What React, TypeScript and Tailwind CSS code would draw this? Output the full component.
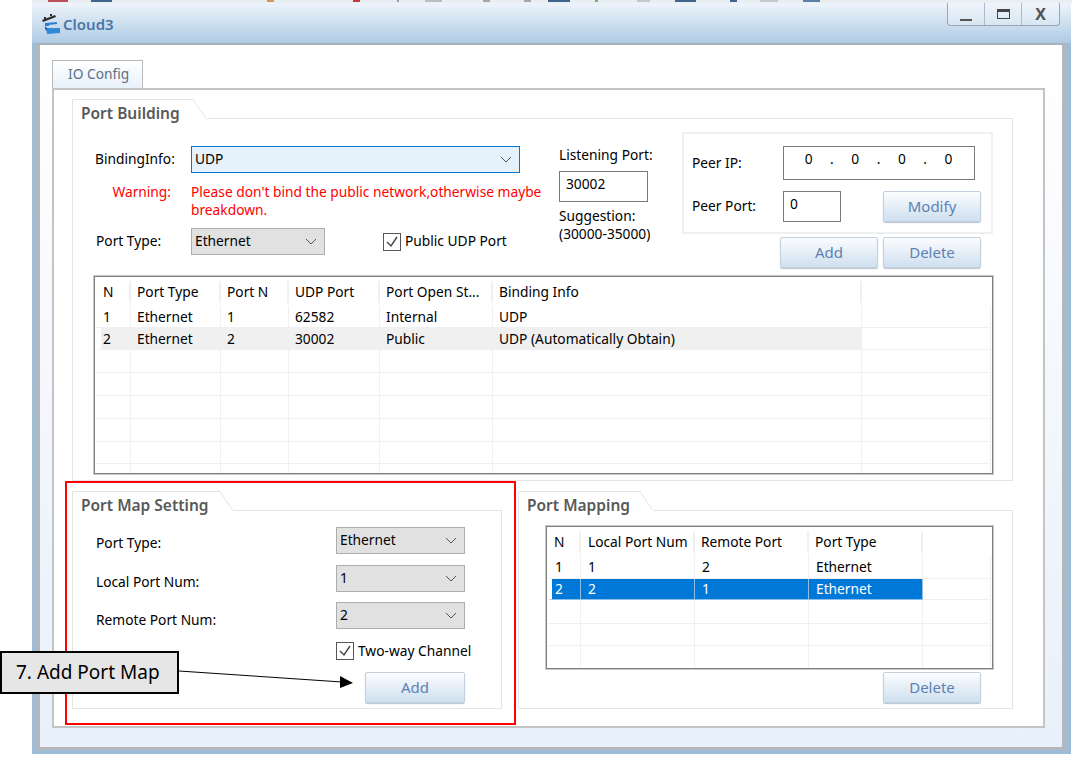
import React from 'react';

const FONT = '"Noto Sans", "DejaVu Sans", sans-serif';

function Chevron() {
  return (
    <svg width="12" height="7" viewBox="0 0 12 7" className="shrink-0">
      <polyline points="1,1 6,6 11,1" fill="none" stroke="#555" strokeWidth="1" />
    </svg>
  );
}

function Select({ value, className, focused }: { value: string; className: string; focused?: boolean }) {
  return (
    <div
      className={`flex h-[27px] items-center justify-between border pl-[3px] pr-[7px] text-black ${
        focused ? 'border-[#0078d7] bg-[#e5f1fb]' : 'border-[#adadad] bg-[#e1e1e1]'
      } ${className}`}
    >
      <span>{value}</span>
      <Chevron />
    </div>
  );
}

function Check({ label }: { label: string }) {
  return (
    <div className="flex h-[18px] items-center gap-[4px] text-black">
      <div className="flex h-[18px] w-[18px] items-center justify-center border border-[#555] bg-white">
        <svg width="14" height="14" viewBox="0 0 14 14">
          <polyline points="2,7 6,11 12,2" fill="none" stroke="#444" strokeWidth="1.4" />
        </svg>
      </div>
      <span>{label}</span>
    </div>
  );
}

function Btn({ label, className }: { label: string; className: string }) {
  return (
    <button className={`h-[31px] rounded-[2px] border border-[#c3d0db] bg-gradient-to-b from-[#fbfcfe] to-[#cfe0f0] text-[15px] text-[#5e82b3] shadow-[0_1px_1px_#b8c4cf] ${className}`}>
      {label}
    </button>
  );
}

function Group({ title, tabClass, className, children }: { title: string; tabClass: string; className: string; children: React.ReactNode }) {
  return (
    <div className={`flex flex-col ${className}`}>
      <div className="flex h-[20px] shrink-0">
        <div className={`rounded-tl-[2px] border-l border-t border-[#e4e4e4] pl-[8px] text-[15.5px] font-semibold leading-[27px] text-[#595959] ${tabClass}`}>
          {title}
        </div>
        <svg width="14" height="20" viewBox="0 0 14 20" className="shrink-0">
          <line x1="0" y1="0.5" x2="13" y2="19.5" stroke="#e4e4e4" />
        </svg>
        <div className="flex-1 border-b border-[#e4e4e4]" />
      </div>
      <div className="flex-1 border-x border-b border-[#e4e4e4]">{children}</div>
    </div>
  );
}

const BUILD_COLS = [
  { name: 'N', cls: 'w-[35px] pl-[7px]' },
  { name: 'Port Type', cls: 'w-[90px] pl-[6px]' },
  { name: 'Port N', cls: 'w-[68px] pl-[6px]' },
  { name: 'UDP Port', cls: 'w-[91px] pl-[6px]' },
  { name: 'Port Open St...', cls: 'w-[113px] pl-[6px]' },
  { name: 'Binding Info', cls: 'w-[369px] pl-[6px]' },
  { name: '', cls: 'pl-[6px]' },
];

const BUILD_ROWS = [
  { h: 'h-[22px]', cells: ['1', 'Ethernet', '1', '62582', 'Internal', 'UDP', ''] },
  { h: 'h-[22px]', cells: ['2', 'Ethernet', '2', '30002', 'Public', 'UDP (Automatically Obtain)', ''], active: true },
  { h: 'h-[23px]', cells: ['', '', '', '', '', '', ''] },
  { h: 'h-[23px]', cells: ['', '', '', '', '', '', ''] },
  { h: 'h-[23px]', cells: ['', '', '', '', '', '', ''] },
  { h: 'h-[23px]', cells: ['', '', '', '', '', '', ''] },
  { h: 'h-[22px]', cells: ['', '', '', '', '', '', ''] },
  { h: 'h-[10px]', cells: ['', '', '', '', '', '', ''] },
];

const MAP_COLS = [
  { name: 'N', cls: 'w-[33px] pl-[6px]' },
  { name: 'Local Port Num', cls: 'w-[114px] pl-[7px]' },
  { name: 'Remote Port', cls: 'w-[114px] pl-[6px]' },
  { name: 'Port Type', cls: 'w-[114px] pl-[6px]' },
  { name: '', cls: 'pl-[6px]' },
];

const MAP_ROWS = [
  { h: 'h-[24px]', cells: ['1', '1', '2', 'Ethernet', ''] },
  { h: 'h-[21px]', cells: ['2', '2', '1', 'Ethernet', ''], selected: true },
  { h: 'h-[24px]', cells: ['', '', '', '', ''] },
  { h: 'h-[22px]', cells: ['', '', '', '', ''] },
  { h: 'h-[23px]', cells: ['', '', '', '', ''] },
];

type Row = { h: string; cells: string[]; active?: boolean; selected?: boolean };

function GridTable({ cols, rows, className, headClass, inset, cellPad }: { cols: { name: string; cls: string }[]; rows: Row[]; className: string; headClass: string; inset: string; cellPad: string }) {
  return (
    <div className={`overflow-hidden border border-[#808080] bg-white p-[1px] shadow-[0_0_0_1px_#c8c8c8] ${className}`}>
      <table className="w-full table-fixed border-separate border-spacing-0 text-left text-black">
        <thead>
          <tr className={headClass}>
            {cols.map((c, i) => (
              <th key={i} className={`truncate p-0 font-normal ${c.cls}`}>
                <div className={`leading-[22px] ${i < cols.length - 1 ? 'border-r-2 border-[#f0f0f0]' : ''}`}>{c.name}&nbsp;</div>
              </th>
            ))}
          </tr>
        </thead>
        <tbody>
          {rows.map((r, ri) => (
            <tr key={ri} className={r.h}>
              {r.cells.map((cell, i) => {
                const last = i === cols.length - 1;
                let tone = 'border-[#f0f0f0]';
                if (!last && r.selected) tone = 'border-[#8fc0ea] bg-[#0078d7] text-white';
                if (!last && r.active) tone = 'border-[#f0f0f0] bg-[#f0f0f0]';
                const insetCell = i === 0 && (r.active || r.selected);
                return (
                  <td
                    key={i}
                    className={`overflow-hidden whitespace-nowrap border-b border-r p-0 leading-none ${tone} ${insetCell ? inset : i === 0 ? 'pl-[7px]' : cellPad}`}
                  >
                    {cell}
                  </td>
                );
              })}
            </tr>
          ))}
        </tbody>
      </table>
    </div>
  );
}

function PortBuilding() {
  return (
    <Group title="Port Building" tabClass="w-[121px]" className="h-[382px] w-[941px]">
      <div className="flex h-[149px] pl-[22px]">
        <div className="w-[464px] pt-[27px]">
          <div className="flex items-center">
            <div className="w-[96px] text-black">BindingInfo:</div>
            <Select value="UDP" focused className="w-[329px]" />
          </div>
          <div className="mt-[10px] flex leading-[18px] text-[#ff0000]">
            <div className="w-[76px] text-right">Warning:</div>
            <div className="ml-[20px] w-[352px]">Please don't bind the public network,otherwise maybe breakdown.</div>
          </div>
          <div className="mt-[9px] flex items-center">
            <div className="w-[96px] pl-[1px] text-black">Port Type:</div>
            <Select value="Ethernet" className="w-[134px]" />
            <div className="ml-[58px]">
              <Check label="Public UDP Port" />
            </div>
          </div>
        </div>
        <div className="w-[123px] pt-[27px] leading-[18px] text-black">
          <div>Listening Port:</div>
          <div className="mt-[7px] h-[31px] w-[89px] border border-[#7a7a7a] pl-[6px] pt-[3px]">30002</div>
          <div className="mt-[5px]">Suggestion:</div>
          <div>(30000-35000)</div>
        </div>
        <div className="w-[311px] pt-[13px]">
          <div className="h-[102px] border-2 border-[#f0f0f0] pl-[8px] pt-[12px] text-black">
            <div className="flex items-center">
              <div className="w-[91px]">Peer IP:</div>
              <div className="flex h-[34px] w-[192px] items-start border border-[#7a7a7a] pl-[13px] pt-[2px]">
                {['0', '.', '0', '.', '0', '.', '0'].map((v, i) => (
                  <span key={i} className="w-[23.3px] text-center">{v}</span>
                ))}
              </div>
            </div>
            <div className="mt-[11px] flex items-center">
              <div className="w-[91px]">Peer Port:</div>
              <div className="flex h-[31px] w-[58px] items-start border border-[#7a7a7a] pl-[6px] pt-[2px]">0</div>
              <Btn label="Modify" className="ml-[42px] w-[98px]" />
            </div>
          </div>
          <div className="mt-[3px] flex gap-[5px] pl-[98px]">
            <Btn label="Add" className="w-[98px]" />
            <Btn label="Delete" className="w-[98px]" />
          </div>
        </div>
      </div>
      <GridTable cols={BUILD_COLS} rows={BUILD_ROWS} className="ml-[21px] mt-[8px] h-[198px] w-[899px]" headClass="h-[28px]" inset="border-l-[5px] border-l-white pl-[2px]" cellPad="pl-[6px]" />
    </Group>
  );
}

function PortMapSetting() {
  return (
    <Group title="Port Map Setting" tabClass="w-[148px]" className="h-[218px] w-[430px]">
      <div className="pl-[23px] pt-[16px] text-black">
        <div className="flex items-center">
          <div className="w-[240px] pt-[4px] leading-[18px]">Port Type:</div>
          <Select value="Ethernet" className="w-[129px]" />
        </div>
        <div className="mt-[11px] flex items-center">
          <div className="w-[240px] pt-[6px] leading-[18px]">Local Port Num:</div>
          <Select value="1" className="w-[129px]" />
        </div>
        <div className="mt-[10px] flex items-center">
          <div className="w-[240px] pt-[8px] leading-[18px]">Remote Port Num:</div>
          <Select value="2" className="w-[129px]" />
        </div>
        <div className="ml-[240px] mt-[13px]">
          <Check label="Two-way Channel" />
        </div>
        <Btn label="Add" className="ml-[269px] mt-[12px] w-[100px]" />
      </div>
    </Group>
  );
}

function PortMapping() {
  return (
    <Group title="Port Mapping" tabClass="w-[122px]" className="h-[218px] w-[495px]">
      <GridTable cols={MAP_COLS} rows={MAP_ROWS} className="ml-[27px] mt-[15px] h-[143px] w-[447px]" headClass="h-[27px]" inset="border-l-[4px] border-l-white pl-[3px]" cellPad="pl-[7px]" />
      <div className="mt-[3px] flex justify-end pr-[31px]">
        <Btn label="Delete" className="w-[98px]" />
      </div>
    </Group>
  );
}

export default function App() {
  return (
    <div className="relative h-[758px] w-[1075px] overflow-hidden bg-white text-[13.75px]" style={{ fontFamily: FONT }}>
      {/* bits of the desktop toolbar showing above the window */}
      <svg width="1075" height="3" viewBox="0 0 1075 3" className="block">
        <rect x="32" width="1040" height="3" fill="#e9eef3" />
        <rect x="48" width="20" height="2" fill="#b9505a" />
        <rect x="91" width="21" height="2" fill="#41648f" />
        <rect x="267" width="7" height="2" fill="#cf9a55" />
        <rect x="353" width="7" height="2" fill="#c8383a" />
        <rect x="397" width="2" height="2" fill="#8aa0b5" />
        <rect x="425" width="17" height="2" fill="#b9bfc4" />
        <rect x="483" width="7" height="2" fill="#a7a7a7" />
        <rect x="524" width="7" height="2" fill="#a7a7a7" />
        <rect x="548" width="22" height="2" fill="#41648f" />
        <rect x="595" width="3" height="2" fill="#79b45a" />
        <rect x="637" width="13" height="2" fill="#c3c8cc" />
        <rect x="675" width="21" height="2" fill="#41648f" />
        <rect x="730" width="7" height="2" fill="#41648f" />
        <rect x="760" width="18" height="2" fill="#c3c8cc" />
        <rect x="803" width="17" height="2" fill="#5a80a8" />
      </svg>
      <div className="ml-[32px] flex h-[751px] w-[1039px] flex-col rounded-t-[4px] bg-[#9dbcd6] pb-[4px] pl-[3px] pr-[5px]">
        <div className="-ml-[3px] -mr-[5px] flex h-[40px] shrink-0 items-start justify-between rounded-t-[4px] bg-gradient-to-b from-[#eef4fb] to-[#aecbe4] pr-[11px]">
          <div className="flex items-center gap-[2px] pl-[9px] pt-[10px]">
            <svg width="20" height="22" viewBox="0 0 20 22">
              <path d="M1 7 L14 2 L15 4 L2 9 Z" fill="#2b2b2b" />
              <path d="M3 4 L5 4 L5 6 L3 6 Z M9 1 L11 1 L11 3 L9 3 Z" fill="#2b2b2b" />
              <path d="M4 10 L16 9 L16 11 L8 12 L8 13 L4 13 Z" fill="#2f7fd0" />
              <path d="M5 15 L19 15 L19 20 L6 21 Z" fill="#2f8ad8" />
              <path d="M4 13 L6 15 L6 18 L4 16 Z" fill="#1d5fa8" />
            </svg>
            <span className="text-[15px] font-semibold leading-none text-[#4a76a8]">Cloud3</span>
          </div>
          <div className="flex h-[23px] rounded-b-[4px] border border-t-0 border-[#9aa8b4] bg-gradient-to-b from-[#eef4fa] to-[#d8e6f2]">
            <div className="flex w-[37px] items-end justify-center border-r border-[#a9bac8] pb-[4px]">
              <div className="h-[2px] w-[12px] bg-[#555]" />
            </div>
            <div className="flex w-[37px] items-center justify-center border-r border-[#a9bac8]">
              <div className="h-[10px] w-[13px] border border-t-[3px] border-[#444]" />
            </div>
            <div className="flex w-[37px] items-center justify-center text-[16px] font-bold leading-none text-[#555]">X</div>
          </div>
        </div>
        <div className="flex-1 border-b-[3px] border-l-[5px] border-r-[4px] border-t-2 border-b-[#b4b8bc] border-l-[#b4b8bc] border-r-[#b4b8bc] border-t-[#a8b0b8] bg-gradient-to-b from-white to-[#e8f0fb] pl-[12px] pr-[17px] pt-[15px]">
          <div className="flex h-[28px] w-[91px] items-center border-x border-t border-[#b9b9b9] bg-gradient-to-b from-white to-[#e8f1fa] pl-[15px] text-[#5c6f84]">
            IO Config
          </div>
          <div className="h-[640px] border-2 border-[#c4c4c4] bg-white pl-[18px] pt-[9px]">
            <PortBuilding />
            <div className="mt-[10px] flex gap-[16px]">
              <PortMapSetting />
              <PortMapping />
            </div>
          </div>
        </div>
      </div>

      {/* highlight box */}
      <div className="absolute left-[65px] top-[481px] h-[244px] w-[451px] border-2 border-[#ff0000]" />

      {/* callout */}
      <div className="absolute left-0 top-[651px] flex h-[43px] w-[179px] items-center border-2 border-black bg-[#e6e6e6] pl-[14px] text-[19px] text-black">
        7. Add Port Map
      </div>
      <svg className="absolute left-[178px] top-[665px]" width="180" height="25" viewBox="0 0 180 25">
        <line x1="1" y1="6" x2="164" y2="17" stroke="#000" strokeWidth="1" />
        <polygon points="162,11 175,18 162,23" fill="#000" />
      </svg>
    </div>
  );
}
